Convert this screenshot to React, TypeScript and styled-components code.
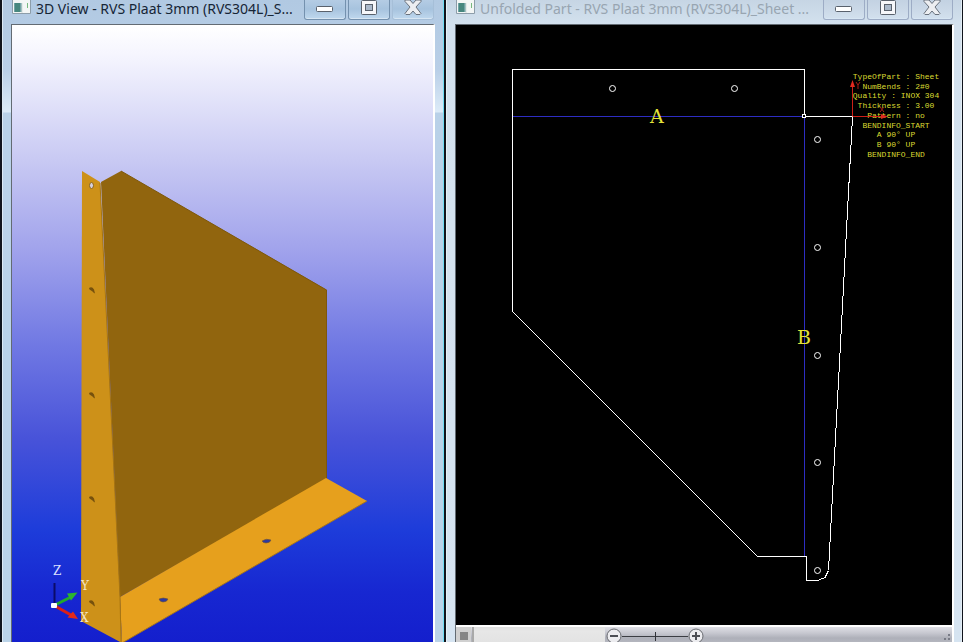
import React from "react";
import styled, { createGlobalStyle } from "styled-components";

const GlobalStyle = createGlobalStyle`
  *, *::before, *::after { box-sizing: border-box; }
  html, body { margin: 0; height: 100%; }
  body { overflow: hidden; background: #10141c; font-family: "Noto Sans", "Open Sans", sans-serif; }
  #root { height: 100%; }
`;

const Desktop = styled.main`
  display: grid;
  grid-template-columns: minmax(0, 444fr) minmax(0, 519fr);
  grid-template-rows: minmax(0, 1fr);
  height: 100vh;
`;

const WindowFrame = styled.section<{ $active: boolean }>`
  display: flex;
  flex-direction: column;
  min-width: 0;
  margin: ${(p) => (p.$active ? "0 0 0 2px" : "0 1px 0 2px")};
  padding: ${(p) => (p.$active ? "0 8px" : "0 7px 0 8px")};
  border-left: 1px solid ${(p) => (p.$active ? "#dce9f4" : "#e8f0f6")};
  border-right: 1px solid ${(p) => (p.$active ? "#6fdcf4" : "#e4eef5")};
  background: ${(p) =>
    p.$active
      ? "linear-gradient(#b1c9e2 0, #b9cfe7 70px, #dcebf8 112px, #b9d1e8 113px, #bad3e8 100%)"
      : "linear-gradient(#c6d5e4 0, #d3e1ee 24px, #d6e4f1 100%)"};
`;

const TitleBar = styled.header`
  display: flex;
  align-items: flex-start;
  flex: none;
  height: 24px;
`;

const Title = styled.h1<{ $active: boolean }>`
  flex: 1;
  min-width: 0;
  margin: 0 0 0 5px;
  overflow: hidden;
  white-space: nowrap;
  font-size: 14px;
  font-weight: 400;
  line-height: 18px;
  color: ${(p) => (p.$active ? "#162536" : "#98a5b1")};
`;

const Caption = styled.div`
  display: flex;
  flex: none;
  gap: 2px;
  padding-right: 1px;
`;

const CaptionButton = styled.button<{ $active: boolean; $quiet?: boolean }>`
  width: 42px;
  height: 20px;
  padding: 0;
  border: 1px solid ${(p) => (p.$active ? (p.$quiet ? "#a6bfd8" : "#7491ae") : "#9dacc5")};
  border-top: 0;
  border-radius: 0 0 3px 3px;
  background: ${(p) =>
    p.$active
      ? "linear-gradient(#b4cce4, #a7c3de 9px, #bfd8ee)"
      : "linear-gradient(#c3d2e2, #cad8e7 9px, #d3e1ee)"};
  box-shadow: inset 0 -1px #d7e6f3;
  svg { display: block; margin: 0 auto; }
`;

const AppIconSvg = styled.svg`
  flex: none;
  display: block;
  margin-left: 1px;
`;

const Client = styled.div`
  display: flex;
  flex-direction: column;
  flex: 1;
  min-height: 0;
  border-top: 1px solid #636b73;
  border-left: 1px solid #636b73;
  border-right: 2px solid #fff;
`;

const Viewport = styled.div<{ $scene: boolean }>`
  flex: 1;
  min-height: 0;
  overflow: hidden;
  background: ${(p) =>
    p.$scene
      ? "linear-gradient(#ffffff 0%, #f5f5fe 5%, #c8c9f3 22%, #a2a4ec 36%, #7078e3 52%, #4853d9 67%, #1d3cda 82%, #1727d1 92%, #141fcd 100%)"
      : "#000"};
  svg { display: block; }
`;

const Mark = styled.text`
  font-family: "DejaVu Serif", serif;
  font-size: 12px;
  font-weight: 400;
`;

const BendMark = styled(Mark)`
  font-size: 19px;
  fill: #e3e33a;
`;

const InfoText = styled.text`
  font-family: "Liberation Mono", monospace;
  font-size: 8px;
  fill: #dada31;
  text-anchor: middle;
`;

const StatusBar = styled.footer`
  display: flex;
  flex: none;
  height: 17px;
  border-top: 2px solid #fff;
  background: linear-gradient(#dedee5, #c7c8d0 6px, #aeb0b9 11px, #b4b6be);
`;

const StopButton = styled.button`
  display: flex;
  align-items: center;
  justify-content: center;
  flex: none;
  width: 15px;
  padding: 2px 0 0;
  border: 0;
  background: #d0d0d0;
`;

const StatusField = styled.div`
  flex: 0 1 133px;
  margin-left: 1px;
  border-left: 2px solid #a9a9a9;
  background: linear-gradient(#dfdfdf, #e7e7e7 4px, #e3e3e3);
`;

const Zoom = styled.div`
  display: flex;
  align-items: center;
  height: 18px;
  margin-left: 1px;
`;

const ZoomButton = styled.button`
  width: 16px;
  height: 16px;
  padding: 0;
  border: 0;
  background: none;
  svg { display: block; }
`;

const ZoomRange = styled.input`
  appearance: none;
  width: 66px;
  height: 9px;
  margin: 0;
  background: linear-gradient(#3b3d43, #3b3d43) center / 100% 1px no-repeat;
  &::-webkit-slider-thumb {
    appearance: none;
    width: 1px;
    height: 9px;
    background: #303238;
  }
`;

const Grip = styled.svg`
  align-self: flex-end;
  margin-left: auto;
`;

function AppIcon() {
  return (
    <AppIconSvg width="19" height="15" viewBox="0 0 19 15" aria-hidden="true">
      <path d="M.5 0v13.500h18V0" fill="#f3f6f5" stroke="#8d9da9" />
      <path d="M2 3h8v9H2z" fill="#70a3a4" />
      <path d="M3 3h5v9H3z" fill="#47877e" />
      <path d="M15.500 3v5" stroke="#77b97e" />
      <path d="M10 3v10" stroke="#d6dddc" />
    </AppIconSvg>
  );
}

function CaptionGlyph({ kind }: { kind: "minimize" | "maximize" | "close" }) {
  return (
    <svg width="20" height="19" viewBox="0 0 20 19" aria-hidden="true">
      {kind === "minimize" && (
        <rect x="1.5" y="6.5" width="16" height="5" rx="1" fill="#fff" stroke="#59616c" />
      )}
      {kind === "maximize" && (
        <>
          <rect x="2.5" y=".5" width="15" height="14" rx="1" fill="#f6f7fa" stroke="#59616c" />
          <rect x="6.5" y="4.5" width="7" height="6" fill="#aab9cb" stroke="#59616c" />
        </>
      )}
      {kind === "close" && (
        <path
          d="M2 0h5l3 3.5L13 0h5v1.5L13 7l5 6.5-1 1h-4l-3-3.5-3 3.5H3l-1-1L7 7 2 1.5z"
          fill="#eceef1"
          stroke="#69717c"
          strokeLinejoin="round"
        />
      )}
    </svg>
  );
}

function AppWindow({
  title,
  active,
  children,
}: {
  title: string;
  active: boolean;
  children: React.ReactNode;
}) {
  return (
    <WindowFrame $active={active}>
      <TitleBar>
        <AppIcon />
        <Title $active={active}>{title}</Title>
        <Caption>
          <CaptionButton $active={active} aria-label="Minimize">
            <CaptionGlyph kind="minimize" />
          </CaptionButton>
          <CaptionButton $active={active} aria-label="Maximize">
            <CaptionGlyph kind="maximize" />
          </CaptionButton>
          <CaptionButton $active={active} $quiet aria-label="Close">
            <CaptionGlyph kind="close" />
          </CaptionButton>
        </Caption>
      </TitleBar>
      <Client>{children}</Client>
    </WindowFrame>
  );
}

const flangeHoles = [290, 395, 499, 603];

function SolidModel() {
  return (
    <svg width="422" height="617" viewBox="12 25 422 617" role="img" aria-label="3D view of the bent sheet">
      <path d="M101 182 121 171 327 290V479L120 597z" fill="#91650e" />
      <path d="M121 171 326.500 290V478" fill="none" stroke="#7e580c" />
      <path d="M120 597 326 478 367 501 122 643z" fill="#e6a01d" />
      <path d="M367 501 122 643" stroke="#a8761b" />
      <path d="M82 171 100 182 120 597 122 643 81 621z" fill="#cd9119" />
      <path d="M100 183 120 597 121 642" fill="none" stroke="#a8750f" />
      <ellipse cx="91.500" cy="185.500" rx="2" ry="3" fill="#d5cfdf" stroke="#8c651a" />
      {flangeHoles.map((y) => (
        <path
          key={y}
          d={`M89 ${y - 2}q3-2 5 1.500l1 4q-2-1-2.500-2l-3-2z`}
          fill="#76510d"
        />
      ))}
      <path d="M159 599q4-2 9 0-1 3-5 3-3 0-4-3z" fill="#2d39a0" stroke="#75552d" strokeWidth=".6" />
      <path d="M262 541q4-3 9-1-1 3-5 3-3 0-4-2z" fill="#2d39a0" stroke="#75552d" strokeWidth=".6" />
      <path d="M54.500 605V583" stroke="#0b0b69" strokeWidth="2" />
      <path d="M55 605 71 597" stroke="#23a82b" strokeWidth="3" />
      <path d="M67 593.500 77.500 592.500 71 600.500z" fill="#2bb62e" />
      <path d="M55 606 71 615" stroke="#dc2016" strokeWidth="3" />
      <path d="M73 611.500 78 619 67.500 617.500z" fill="#e52a18" />
      <rect x="51" y="603" width="6" height="5" rx="1" fill="#fff" />
      <Mark x="53" y="575" fill="#dce0ff">Z</Mark>
      <Mark x="81" y="590" fill="#f2e6c8">Y</Mark>
      <Mark x="80" y="622" fill="#f2e6c8">X</Mark>
    </svg>
  );
}

const partInfo = [
  "TypeOfPart : Sheet",
  "NumBends : 2#0",
  "Quality : INOX 304",
  "Thickness : 3.00",
  "Pattern : no",
  "BENDINFO_START",
  "A 90° UP",
  "B 90° UP",
  "BENDINFO_END",
];

const holes = [
  [612, 88],
  [734, 88],
  [817, 139],
  [817, 247],
  [817, 355],
  [817, 462],
  [817, 570],
];

function FlatPattern() {
  return (
    <svg width="496" height="600" viewBox="456 25 496 600" role="img" aria-label="Unfolded sheet outline">
      <g fill="none" shapeRendering="crispEdges">
        <path d="M512.500 116.500H804.500V556" stroke="#2d2dc2" />
        <path
          d="M804.500 116.500V69.500H512.500V311.500L757.500 556.500H806.500V580.500H817.500L825 577.500 828.500 570.500 852.500 116.500z"
          stroke="#fff"
        />
        <rect x="802.500" y="114.500" width="3" height="3" fill="#000" stroke="#fff" />
      </g>
      {holes.map(([x, y]) => (
        <circle key={`${x}-${y}`} cx={x + 0.5} cy={y + 0.5} r="3" fill="none" stroke="#fff" />
      ))}
      <BendMark x="650" y="123">A</BendMark>
      <BendMark x="797" y="344">B</BendMark>
      {partInfo.map((line, i) => (
        <InfoText key={line} x="896" y={79 + Math.round(i * 9.7)}>
          {line}
        </InfoText>
      ))}
      <path d="M852.500 116V83M852.500 116.500H886" stroke="#cd2018" fill="none" />
      <path d="M850 87 852.500 80 855 87zM881 114 888 116.500 881 119z" fill="#e02a20" />
      <path d="M856 82 858 85 860 82M858 85V89M880 107 884 112M884 107 880 112" stroke="#a91c16" fill="none" />
    </svg>
  );
}

function ZoomGlyph({ plus }: { plus?: boolean }) {
  return (
    <svg width="16" height="16" viewBox="0 0 16 16" aria-hidden="true">
      <circle cx="8" cy="8" r="7" fill="#ececef" stroke="#686a70" />
      <path d={plus ? "M4 8h8M8 4v8" : "M4 8h8"} stroke="#4c4e54" strokeWidth="2" />
    </svg>
  );
}

export default function App() {
  return (
    <>
      <GlobalStyle />
      <Desktop>
        <AppWindow active title="3D View - RVS Plaat 3mm (RVS304L)_S...">
          <Viewport $scene>
            <SolidModel />
          </Viewport>
        </AppWindow>
        <AppWindow active={false} title="Unfolded Part - RVS Plaat 3mm (RVS304L)_Sheet ...">
          <Viewport $scene={false}>
            <FlatPattern />
          </Viewport>
          <StatusBar>
            <StopButton aria-label="Stop">
              <svg width="8" height="8" viewBox="0 0 8 8" aria-hidden="true">
                <path d="M0 0h8v8H0z" fill="#858585" />
              </svg>
            </StopButton>
            <StatusField />
            <Zoom>
              <ZoomButton aria-label="Zoom out">
                <ZoomGlyph />
              </ZoomButton>
              <ZoomRange type="range" min="0" max="100" defaultValue="50" aria-label="Zoom" />
              <ZoomButton aria-label="Zoom in">
                <ZoomGlyph plus />
              </ZoomButton>
            </Zoom>
            <Grip width="9" height="8" viewBox="0 0 9 8" aria-hidden="true">
              <path d="M5 0h2v2H5zM1 4h2v2H1zM5 4h2v2H5z" fill="#787b86" />
            </Grip>
          </StatusBar>
        </AppWindow>
      </Desktop>
    </>
  );
}
